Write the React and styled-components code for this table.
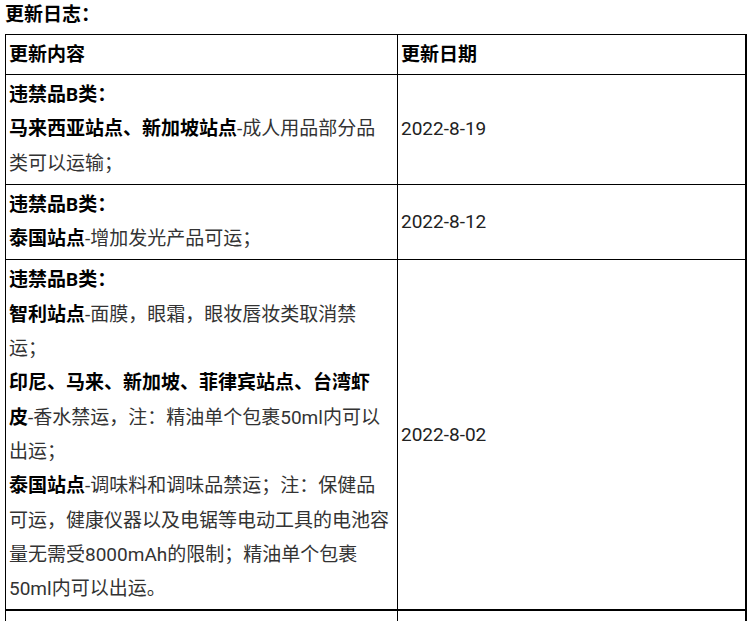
import styled, { createGlobalStyle } from 'styled-components';

const entries = [
  {
    date: '2022-8-19',
    notes: [{ site: '马来西亚站点、新加坡站点', text: '-成人用品部分品类可以运输；' }],
  },
  {
    date: '2022-8-12',
    notes: [{ site: '泰国站点', text: '-增加发光产品可运；' }],
  },
  {
    date: '2022-8-02',
    notes: [
      { site: '智利站点', text: '-面膜，眼霜，眼妆唇妆类取消禁运；' },
      {
        site: '印尼、马来、新加坡、菲律宾站点、台湾虾皮',
        text: '-香水禁运，注：精油单个包裹50ml内可以出运；',
      },
      {
        site: '泰国站点',
        text: '-调味料和调味品禁运；注：保健品可运，健康仪器以及电锯等电动工具的电池容量无需受8000mAh的限制；精油单个包裹50ml内可以出运。',
      },
    ],
  },
];

function App() {
  return (
    <>
      <GlobalStyle />
      <Page>
        <Title>更新日志：</Title>
        <LogTable>
          <colgroup>
            <ContentCol />
            <DateCol />
          </colgroup>
          <thead>
            <tr>
              <HeadCell>更新内容</HeadCell>
              <HeadCell last>更新日期</HeadCell>
            </tr>
          </thead>
          <tbody>
            {entries.map((entry) => (
              <tr key={entry.date}>
                <ContentCell>
                  <Line>
                    <Strong>违禁品B类：</Strong>
                  </Line>
                  {entry.notes.map((note, i) => (
                    <Line key={i}>
                      <Strong>{note.site}</Strong>
                      {note.text}
                    </Line>
                  ))}
                </ContentCell>
                <DateCell>{entry.date}</DateCell>
              </tr>
            ))}
            <NextRow>
              <ContentCell thick>&nbsp;</ContentCell>
              <DateCell thick>&nbsp;</DateCell>
            </NextRow>
          </tbody>
        </LogTable>
      </Page>
    </>
  );
}

// -------------------------------------------------- styling ----------------------------------------------
const GlobalStyle = createGlobalStyle`
  html, body {
    margin: 0;
    padding: 0;
    background: #fff;
  }

  body {
    font-family: Roboto, "Noto Sans CJK SC", "Noto Sans", sans-serif;
    font-size: 19px;
    color: #333;
  }
`;

const Page = styled.div`
  padding: 0 5px;
`;

const Title = styled.div`
  font-weight: bold;
  color: #000;
  line-height: 30px;
  margin-bottom: 4px;
`;

const LogTable = styled.table`
  border-collapse: collapse;
  table-layout: fixed;
  width: 742px;
`;

const ContentCol = styled.col`
  width: 392px;
`;

const DateCol = styled.col`
  width: auto;
`;

const HeadCell = styled.th`
  border: 1px solid #000;
  border-right-width: ${({ last }) => (last ? '2px' : '1px')};
  padding: 3px;
  text-align: left;
  font-weight: bold;
  color: #000;
  line-height: 33px;
  vertical-align: middle;
`;

const ContentCell = styled.td`
  border: 1px solid #000;
  border-top-width: ${({ thick }) => (thick ? '2px' : '1px')};
  padding: 3px 6px 3px 3px;
  line-height: 34.3px;
  vertical-align: top;
`;

const DateCell = styled.td`
  border: 1px solid #000;
  border-right-width: 2px;
  border-top-width: ${({ thick }) => (thick ? '2px' : '1px')};
  padding: 3px;
  line-height: 34.3px;
  vertical-align: middle;
  color: #222;
`;

const Line = styled.div`
  margin: 0;
`;

const Strong = styled.strong`
  font-weight: bold;
  color: #000;
`;

const NextRow = styled.tr`
  height: 60px;
`;

export default App;
